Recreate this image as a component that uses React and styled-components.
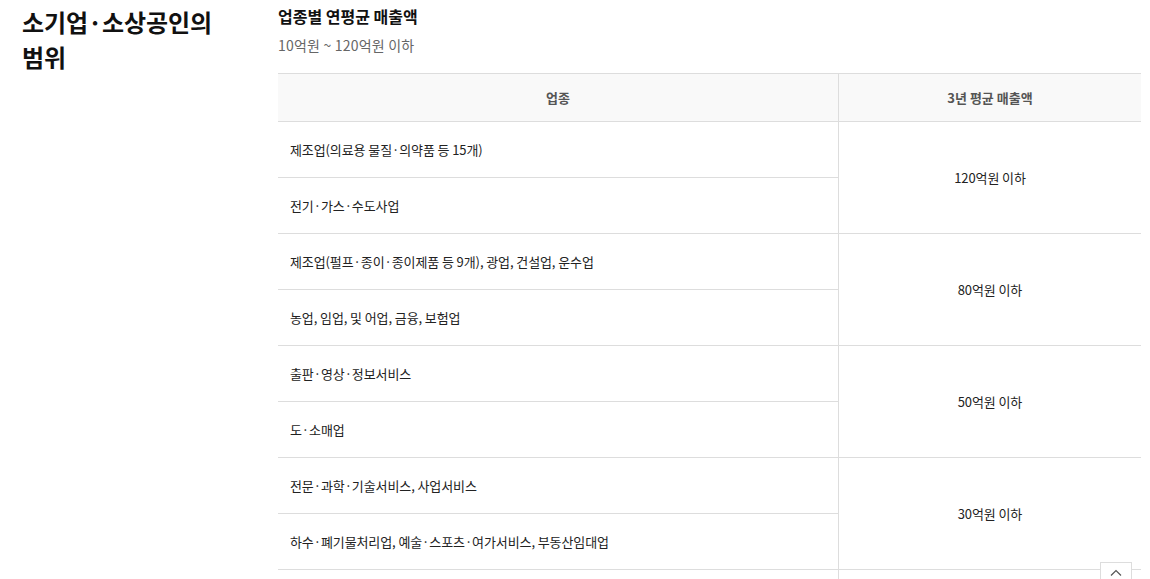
import React from "react";
import styled, { createGlobalStyle } from "styled-components";

const GlobalStyle = createGlobalStyle`
  html, body {
    margin: 0;
    padding: 0;
    background: #fff;
    font-family: "Noto Sans CJK KR", "Noto Sans", sans-serif;
    color: #222;
  }
`;

const Page = styled.div`
  display: flex;
  padding: 0 9px 0 22px;
  height: 579px;
  overflow: hidden;
`;

const Side = styled.div`
  flex: 0 0 256px;
  padding-top: 4px;
`;

const Title = styled.h2`
  margin: 0;
  font-size: 24px;
  font-weight: 700;
  line-height: 35px;
  color: #111;
  letter-spacing: -0.1px;
`;

const Content = styled.div`
  flex: 1;
  padding-top: 4px;
`;

const SubTitle = styled.h3`
  margin: 0;
  font-size: 16px;
  font-weight: 700;
  line-height: 24px;
  color: #111;
`;

const Range = styled.p`
  margin: 7px 0 0;
  font-size: 14px;
  line-height: 20px;
  color: #666;
  letter-spacing: 0.2px;
`;

const Table = styled.table`
  margin-top: 18px;
  width: 100%;
  border-collapse: collapse;
  border-top: 1px solid #ddd;
  font-size: 13px;
`;

const Th = styled.th`
  height: 47px;
  padding: 0;
  background: #f9f9f9;
  color: #555;
  font-weight: 700;
  text-align: center;
  border-bottom: 1px solid #ddd;
  border-left: ${(p) => (p.divider ? "1px solid #ddd" : "none")};
  width: ${(p) => p.w || "auto"};
`;

const Td = styled.td`
  height: 55px;
  padding: 0 12px;
  border-bottom: 1px solid #ddd;
  border-left: ${(p) => (p.divider ? "1px solid #ddd" : "none")};
  text-align: ${(p) => (p.center ? "center" : "left")};
  color: #222;
  letter-spacing: -0.1px;
`;

const TopButton = styled.button`
  position: fixed;
  right: 18px;
  top: 562px;
  width: 32px;
  height: 32px;
  background: #fff;
  border: 1px solid #ddd;
  display: flex;
  justify-content: center;
  padding-top: 6px;
  cursor: pointer;
`;

const groups = [
  { amount: "120억원 이하", items: ["제조업(의료용 물질·의약품 등 15개)", "전기·가스·수도사업"] },
  { amount: "80억원 이하", items: ["제조업(펄프·종이·종이제품 등 9개), 광업, 건설업, 운수업", "농업, 임업, 및 어업, 금융, 보험업"] },
  { amount: "50억원 이하", items: ["출판·영상·정보서비스", "도·소매업"] },
  { amount: "30억원 이하", items: ["전문·과학·기술서비스, 사업서비스", "하수·폐기물처리업, 예술·스포츠·여가서비스, 부동산임대업"] },
  { amount: "10억원 이하", items: ["숙박·음식점업", "교육서비스"] },
];

const App = () => {
  return (
    <>
      <GlobalStyle />
      <Page>
        <Side>
          <Title>
            소기업·소상공인의
            <br />
            범위
          </Title>
        </Side>
        <Content>
          <SubTitle>업종별 연평균 매출액</SubTitle>
          <Range>10억원 ~ 120억원 이하</Range>
          <Table>
            <thead>
              <tr>
                <Th w="560px">업종</Th>
                <Th divider>3년 평균 매출액</Th>
              </tr>
            </thead>
            <tbody>
              {groups.map((g) =>
                g.items.map((item, i) => (
                  <tr key={item}>
                    <Td>{item}</Td>
                    {i === 0 && (
                      <Td divider center rowSpan={g.items.length}>
                        {g.amount}
                      </Td>
                    )}
                  </tr>
                ))
              )}
            </tbody>
          </Table>
        </Content>
      </Page>
      <TopButton aria-label="맨 위로">
        <svg width="12" height="8" viewBox="0 0 12 8" fill="none">
          <path d="M1 6.5L6 1.5L11 6.5" stroke="#555" strokeWidth="1.2" />
        </svg>
      </TopButton>
    </>
  );
};

export default App;
